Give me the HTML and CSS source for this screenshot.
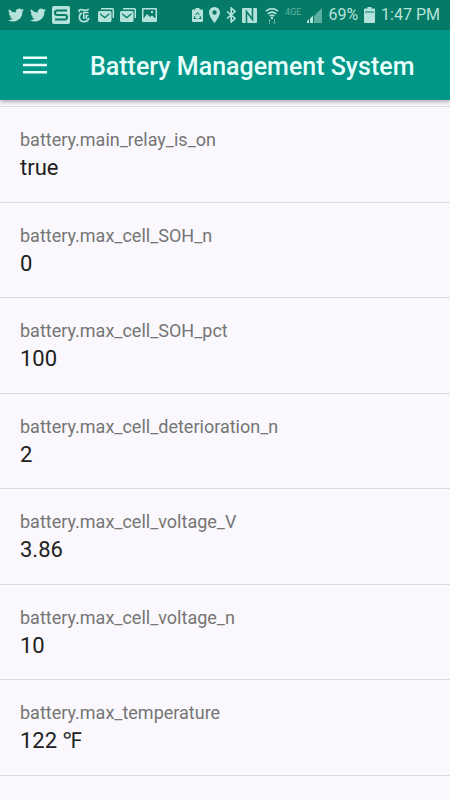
FILE: index.html
```html
<!DOCTYPE html>
<html lang="en">
<head>
<meta charset="utf-8">
<meta name="viewport" content="width=device-width, initial-scale=1">
<title>Battery Management System</title>
<link rel="stylesheet" href="styles.css">
</head>
<body>
<svg class="defs" aria-hidden="true">
  <symbol id="bird" viewBox="0 0 24 24"><path d="M23.9 4.6a10 10 0 0 1-2.8.8 4.9 4.9 0 0 0 2.1-2.7 10 10 0 0 1-3.1 1.2 4.9 4.9 0 0 0-8.4 4.5A14 14 0 0 1 1.700 3.200a4.900 4.900 0 0 0 1.500 6.600 4.900 4.900 0 0 1-2.200-.6v.1a4.900 4.900 0 0 0 3.900 4.800 4.900 4.900 0 0 1-2.200.1 4.900 4.900 0 0 0 4.600 3.400A9.900 9.900 0 0 1 0 19.500a14 14 0 0 0 21.500-12.400 10 10 0 0 0 2.400-2.500z"/></symbol>
  <symbol id="mails" viewBox="0 0 16 14"><path d="M3 0h11.500Q16 0 16 1.500V10h-1.500V1.500H3z"/><path fill-rule="evenodd" d="M1.500 3h10.500q1.500 0 1.500 1.500v8q0 1.500-1.500 1.500H1.500Q0 14 0 12.500v-8Q0 3 1.500 3zM2 5v1.500l4.750 4L11.500 6.500V5L6.750 8.800z"/></symbol>
</svg>
<div class="status">
  <div class="notices">
    <svg width="16" height="16"><use href="#bird"/></svg>
    <svg width="16" height="16"><use href="#bird"/></svg>
    <svg width="18" height="18" viewBox="0 0 18 18"><rect width="18" height="18" rx="2"/><path class="cut" d="M15 4.500H5.500Q3 4.500 3 6.700T5.500 9h7Q15 9 15 11.300T12.500 13.500H3"/></svg>
    <svg class="times" width="12" height="15" viewBox="0 0 12 15"><path class="line" d="M1.500 4C.5 2 2 1.200 4 1.800S8.500 3 10.800 1.200M4 5C.3 6.500.3 13.500 6 13.700c2.800 0 4.300-1.500 4.800-3.700M5 4.500h5.500M5.800 5v6M8.300 7.500h2.200M8.300 7v4"/></svg>
    <svg width="16" height="14"><use href="#mails"/></svg>
    <svg width="16" height="14"><use href="#mails"/></svg>
    <svg width="15" height="14" viewBox="0 0 15 14"><path fill-rule="evenodd" d="M1 0h13q1 0 1 1v12q0 1-1 1H1q-1 0-1-1V1q0-1 1-1zM1.500 1.500v9L5 6l3 3 2-1.500 3.500 3v-9zM9 3h2v2H9z"/></svg>
  </div>
  <div class="system">
    <svg width="11" height="14" viewBox="0 0 11 14"><path d="M3.500 0h4v1.500H10q1 0 1 1V13q0 1-1 1H1q-1 0-1-1V2.500q0-1 1-1h2.500z"/><path class="cut thin" d="M3.700 7L5.500 4.500 7.300 7M8 8l1 2.500H6.500M4.500 10.500H2L3 8"/></svg>
    <svg width="11" height="16" viewBox="0 0 11 16"><path fill-rule="evenodd" d="M5.500 0A5.500 5.500 0 0 0 0 5.500C0 9.500 5.500 16 5.500 16S11 9.500 11 5.500A5.500 5.500 0 0 0 5.500 0zm0 3.300a2.200 2.200 0 1 1 0 4.400 2.200 2.200 0 0 1 0-4.400z"/></svg>
    <svg width="10" height="16" viewBox="0 0 10 16"><path class="line slim" d="M1 4.500l8 7L5.200 15V1L9 4.500l-8 7"/></svg>
    <svg width="15" height="15" viewBox="0 0 15 15"><rect width="15" height="15" rx="1"/><path class="cut fine" d="M4.500 15V3.500L10.500 11.500V0"/></svg>
    <svg class="wifi" width="14" height="17" viewBox="0 0 14 17"><path class="line slim" d="M1 4.200Q7-.8 13 4.200M2.800 6.800Q7 3.300 11.200 6.800M4.700 9.200Q7 7.300 9.300 9.200"/><circle cx="7" cy="11" r="1.200"/><path class="dim" d="M3 14l1.500-2L6 14H5v3H4v-3zM8 15h1v-3h1v3h1l-1.500 2z"/></svg>
    <span class="network">4GE</span>
    <svg width="15" height="15" viewBox="0 0 15 15"><path class="dim" d="M7 8L15 0v15H7z"/><path d="M0 15v-2l2-2v4zM3 15v-4.500l3-3V15z"/></svg>
    <span class="percent">69%</span>
    <svg class="battery" width="11" height="16" viewBox="0 0 11 16"><path class="dim" d="M1 3h9v3H1z"/><path d="M3.500 0h4v1.500H10q1 0 1 1V6h-1V4H1v2H0V2.500q0-1 1-1h2.500zM0 6h11v9q0 1-1 1H1q-1 0-1-1z"/></svg>
    <span class="clock">1:47 PM</span>
  </div>
</div>
<header class="appbar">
  <button class="menu" type="button" aria-label="Menu"><svg width="24" height="18" viewBox="0 0 24 18"><path d="M0 .6h24v2.400H0zM0 7.800h24v2.400H0zM0 15h24v2.400H0z"/></svg></button>
  <h1>Battery Management System</h1>
</header>
<main>
  <dl class="metrics">
    <div class="row"><dt>battery.main_relay_is_on</dt><dd>true</dd></div>
    <div class="row"><dt>battery.max_cell_SOH_n</dt><dd>0</dd></div>
    <div class="row"><dt>battery.max_cell_SOH_pct</dt><dd>100</dd></div>
    <div class="row"><dt>battery.max_cell_deterioration_n</dt><dd>2</dd></div>
    <div class="row"><dt>battery.max_cell_voltage_V</dt><dd>3.86</dd></div>
    <div class="row"><dt>battery.max_cell_voltage_n</dt><dd>10</dd></div>
    <div class="row"><dt>battery.max_temperature</dt><dd>122 ℉</dd></div>
  </dl>
</main>
</body>
</html>
```
FILE: styles.css
```css
* {
  box-sizing: border-box;
}

body {
  margin: 0;
  min-height: 100vh;
  display: flex;
  flex-direction: column;
  background: #faf8fc;
  color: #212121;
  font-family: Roboto, "Noto Sans", sans-serif;
}

.defs {
  position: absolute;
  width: 0;
  height: 0;
}

.status {
  display: flex;
  justify-content: space-between;
  align-items: center;
  height: 30px;
  padding: 0 10px 0 8px;
  background: #057a67;
  color: #b5e3dc;
  fill: currentColor;
}

.status svg {
  display: block;
  flex: none;
}

.notices,
.system {
  display: flex;
  align-items: center;
  gap: 6px;
}

.times {
  margin: 0 2px;
}

.cut {
  fill: none;
  stroke: #057a67;
  stroke-width: 2;
}

.thin {
  stroke-width: 1;
}

.fine {
  stroke-width: 1.5;
}

.line {
  fill: none;
  stroke: currentColor;
  stroke-width: 1.7;
}

.slim {
  stroke-width: 1.6;
}

.dim {
  opacity: 0.5;
}

.wifi {
  margin-left: 2px;
}

.network {
  padding-bottom: 6px;
  font-size: 9px;
  line-height: 10px;
  opacity: 0.5;
}

.percent,
.clock {
  font-size: 16px;
  line-height: 30px;
  white-space: nowrap;
}

.appbar {
  position: relative;
  display: flex;
  align-items: center;
  height: 70px;
  padding: 0 12px;
  background: #009688;
  color: #e8fffc;
  box-shadow: 0 2px 4px rgba(0, 0, 0, 0.3);
}

.menu {
  display: flex;
  justify-content: center;
  align-items: center;
  width: 46px;
  height: 46px;
  padding: 0;
  border: 0;
  background: none;
  color: inherit;
  fill: currentColor;
}

.appbar h1 {
  margin: 0 0 0 32px;
  padding-top: 3px;
  font-size: 25px;
  line-height: 32px;
  font-weight: 500;
  white-space: nowrap;
}

main {
  flex: 1;
  display: flex;
  flex-direction: column;
  padding: 6px 0 24px;
}

.metrics {
  flex: 1;
  display: grid;
  grid-auto-rows: 1fr;
  margin: 0;
  border-top: 1px solid #dcdade;
}

.row {
  padding: 21px 20px 16px;
  border-bottom: 1px solid #dcdade;
}

.row dt {
  color: #757575;
  font-size: 18px;
  line-height: 24px;
}

.row dd {
  margin: 0;
  font-size: 22px;
  line-height: 32px;
}
```
